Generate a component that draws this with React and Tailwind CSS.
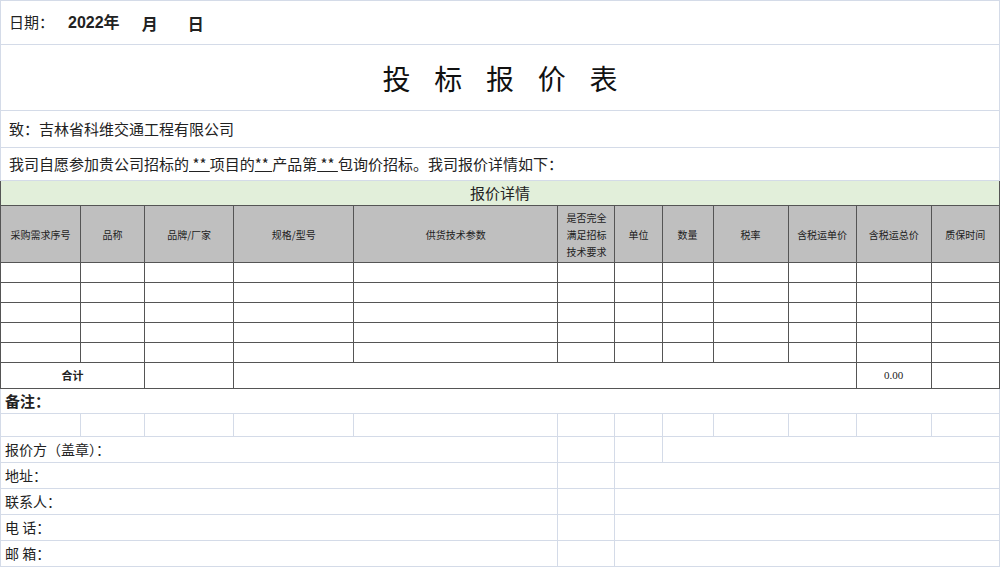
import React from 'react';

const widths = [80, 64, 89, 120, 204, 57, 47, 51, 75, 68, 75, 68];
const heads = ['采购需求序号', '品称', '品牌/厂家', '规格/型号', '供货技术参数', '是否完全满足招标技术要求', '单位', '数量', '税率', '含税运单价', '含税运总价', '质保时间'];

const L = 'border border-[#d4dbe8]';
const D = 'border border-[#555]';

export default function App() {
  return (
    <div className="w-[1000px] h-[569px] overflow-hidden bg-white text-[#222]" style={{ fontFamily: '"Noto Sans CJK SC", "Noto Sans", sans-serif' }}>
      <table className="table-fixed border-collapse w-[1000px]">
        <colgroup>
          {widths.map((w, i) => <col key={i} style={{ width: w }} />)}
        </colgroup>
        <tbody>
          <tr className="h-[44px]">
            <td colSpan={12} className={`${L} px-2 text-[15px]`}>
              <div className="flex items-center">
                <span>日期：</span>
                <span className="ml-[14px] font-bold text-[16px]" style={{ fontFamily: '"Liberation Sans", "Noto Sans CJK SC", sans-serif' }}>2022年</span>
                <span className="ml-[22px] font-bold text-[16px]">月</span>
                <span className="ml-[30px] font-bold text-[16px]">日</span>
              </div>
            </td>
          </tr>
          <tr className="h-[66px]">
            <td colSpan={12} className={`${L} text-center text-[28px] text-[#111] tracking-[0.85em] pl-[0.85em]`}>投标报价表</td>
          </tr>
          <tr className="h-[37px]">
            <td colSpan={12} className={`${L} px-2 text-[15px]`}>致：吉林省科维交通工程有限公司</td>
          </tr>
          <tr className="h-[33px]">
            <td colSpan={12} className={`${L} px-2 text-[15px]`}>
              我司自愿参加贵公司招标的<span className="underline">&nbsp;**&nbsp;</span>项目的<span className="underline">**&nbsp;</span>产品第<span className="underline">&nbsp;**&nbsp;</span>包询价招标。我司报价详情如下：
            </td>
          </tr>
          <tr className="h-[25px]">
            <td colSpan={12} className={`${D} bg-[#e2efda] text-center text-[15px]`}>报价详情</td>
          </tr>
          <tr className="h-[57px]">
            {heads.map((h, i) => (
              <td key={i} className={`${D} border-[#333] bg-[#bfbfbf] text-center text-[10px] leading-[17px] ${i === 5 ? 'px-1' : ''}`}>{h}</td>
            ))}
          </tr>
          {[0, 1, 2, 3, 4].map(r => (
            <tr key={r} className="h-[20px]">
              {widths.map((w, i) => <td key={i} className={D}></td>)}
            </tr>
          ))}
          <tr className="h-[26px]">
            <td colSpan={2} className={`${D} text-center text-[11px] font-bold`}>合计</td>
            <td className={D}></td>
            <td colSpan={7} className={D}></td>
            <td className={`${D} text-center text-[11px]`} style={{ fontFamily: '"Liberation Serif", serif' }}>0.00</td>
            <td className={D}></td>
          </tr>
          <tr className="h-[25px]">
            <td colSpan={12} className={`${L} border-t-[#555] px-1 text-[15px] font-bold`}>备注：</td>
          </tr>
          <tr className="h-[23px]">
            {widths.map((w, i) => <td key={i} className={L}></td>)}
          </tr>
          <tr className="h-[26px]">
            <td colSpan={5} className={`${L} px-1 text-[14px]`}>报价方（盖章）：</td>
            <td className={L}></td>
            <td className={L}></td>
            <td colSpan={5} className={L}></td>
          </tr>
          {['地址：', '联系人：', '电 话：', '邮 箱：'].map(t => (
            <tr key={t} className="h-[26px]">
              <td colSpan={5} className={`${L} px-1 text-[14px]`}>{t}</td>
              <td className={L}></td>
              <td colSpan={6} className={L}></td>
            </tr>
          ))}
        </tbody>
      </table>
    </div>
  );
}
